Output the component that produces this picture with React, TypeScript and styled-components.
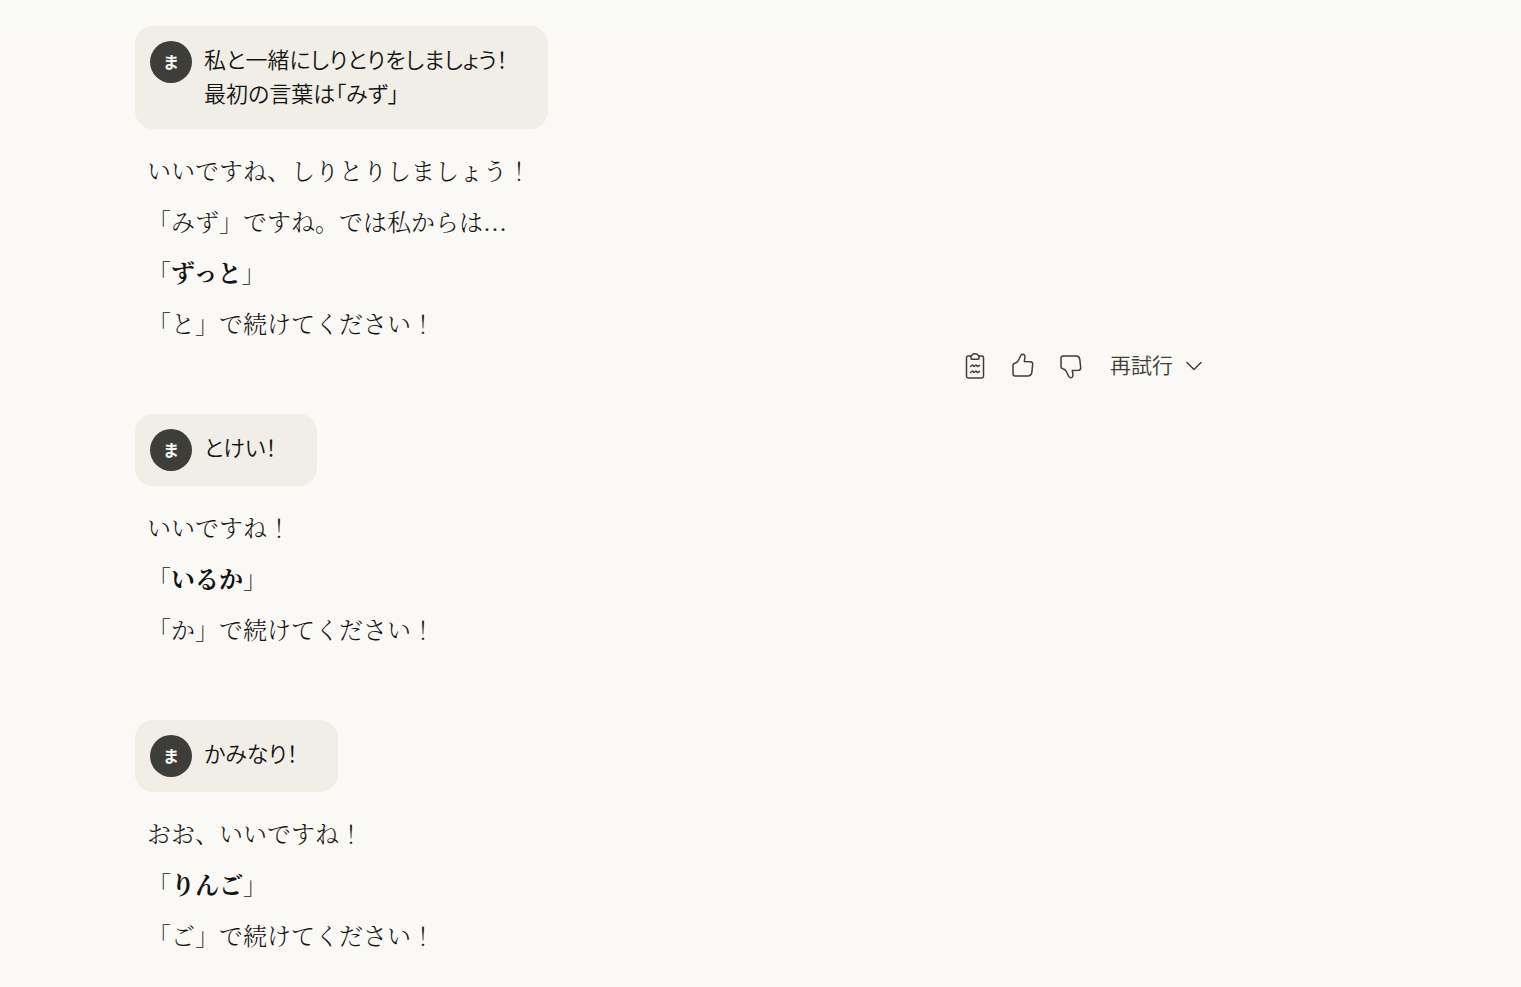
import React from "react";
import styled, { createGlobalStyle } from "styled-components";

const sans = `"Yu Gothic UI", "Noto Sans CJK JP", sans-serif`;
const serif = `"Liberation Serif", "Noto Serif CJK JP", "Noto Serif JP", "Noto Sans CJK JP", serif`;

const GlobalStyle = createGlobalStyle`
  * { box-sizing: border-box; }
  body { margin: 0; background: #faf9f5; color: #141413; }
`;

const Page = styled.main`
  min-height: 100vh;
  padding: 26px 48px 0 135px;
  background: linear-gradient(#f9fbf6, #faf9f5 26px);
`;

const Column = styled.div`
  max-width: 1071px;
`;

const Bubble = styled.section`
  display: flex;
  align-items: flex-start;
  gap: 12px;
  width: fit-content;
  padding: 15px 40px 15px 15px;
  border-radius: 18px;
  background: #f0eee6;
`;

const Avatar = styled.span`
  display: flex;
  flex: none;
  align-items: center;
  justify-content: center;
  width: 42px;
  height: 42px;
  padding-bottom: 2px;
  border-radius: 50%;
  background: #3d3d3a;
  color: #faf9f5;
  font: 700 16px/24px ${sans};
`;

const UserText = styled.p`
  margin: 0;
  padding-bottom: 5px;
  font: 350 22px/34px ${sans};
  font-feature-settings: "palt";
  white-space: pre-line;
`;

const Reply = styled.section`
  display: flex;
  flex-direction: column;
  gap: 15px;
  padding: 25px 12px 0;
`;

const Line = styled.p`
  margin: 0;
  font: 300 24px/36px ${serif};

  strong {
    font-weight: 700;
  }
`;

const Footer = styled.footer`
  display: flex;
  align-items: flex-start;
  justify-content: flex-end;
  height: 71px;
`;

const IconButton = styled.button`
  display: flex;
  align-items: center;
  justify-content: center;
  width: 48px;
  height: 46px;
  padding: 0;
  border: 0;
  background: none;
  color: #3d3d3a;
`;

const RetryButton = styled.button`
  display: flex;
  align-items: center;
  gap: 12px;
  height: 46px;
  padding: 0 3px 0 15px;
  border: 0;
  background: none;
  color: #3d3d3a;
  font: 350 21px/30px ${sans};
`;

const RetryLabel = styled.span`
  padding-bottom: 4px;
`;

const iconProps = {
  width: 30,
  height: 30,
  viewBox: "0 0 30 30",
  fill: "none",
  stroke: "currentColor",
  strokeWidth: 1.5,
  strokeLinecap: "round" as const,
  strokeLinejoin: "round" as const,
  "aria-hidden": true,
};

const ClipboardIcon = () => (
  <svg {...iconProps}>
    <path d="M11 5H8.2Q6.5 5 6.5 6.7V25.300Q6.500 27 8.200 27H21.800Q23.500 27 23.500 25.300V6.700Q23.500 5 21.800 5H19" />
    <path d="M11 5.200Q11.800 5 12.200 3.800Q12.900 2.700 15 2.700Q17.100 2.700 17.800 3.800Q18.200 5 19 5.200V7.200Q19 8.300 17.900 8.300H12.100Q11 8.300 11 7.200Z" />
    <path d="M10.500 15.500L12.500 14L14 15.500L16 14L17.500 15.500L19.500 14.300M10.500 21.500L12.500 20L14 21.500L16 20L17.500 21.500L19.500 20.300" />
  </svg>
);

const ThumbIcon = ({ down = false }: { down?: boolean }) => (
  <svg {...iconProps}>
    <path
      transform={down ? "matrix(1 0 0 -1 0 30)" : undefined}
      d="M5 14.200Q5 12.700 6.800 12.200Q9.600 11.500 10.500 9.200L12.500 5Q13.300 3.300 14.700 3.300Q17.200 3.500 16.900 6.400L16.300 10.500L22.500 10.700Q24.900 11 24.700 13.300L23.800 21.700Q23.300 24.700 20.500 24.900H7Q5 24.900 5 22.700Z"
    />
  </svg>
);

const ChevronIcon = () => (
  <svg {...iconProps} width={18} height={18} viewBox="0 0 18 18">
    <path d="M2 5.500L9 12.500L16 5.500" />
  </svg>
);

const Actions = () => (
  <>
    <IconButton aria-label="コピー"><ClipboardIcon /></IconButton>
    <IconButton aria-label="良い回答"><ThumbIcon /></IconButton>
    <IconButton aria-label="良くない回答"><ThumbIcon down /></IconButton>
    <RetryButton><RetryLabel>再試行</RetryLabel><ChevronIcon /></RetryButton>
  </>
);

type Turn = { user: string; reply: React.ReactNode[]; actions?: boolean };

const turns: Turn[] = [
  {
    user: "私と一緒にしりとりをしましょう！\n最初の言葉は「みず」",
    reply: [
      "いいですね、しりとりしましょう！",
      "「みず」ですね。では私からは…",
      <>「<strong>ずっと</strong>」</>,
      "「と」で続けてください！",
    ],
    actions: true,
  },
  {
    user: "とけい！",
    reply: ["いいですね！", <>「<strong>いるか</strong>」</>, "「か」で続けてください！"],
  },
  {
    user: "かみなり！",
    reply: ["おお、いいですね！", <>「<strong>りんご</strong>」</>, "「ご」で続けてください！"],
  },
];

export default function App() {
  return (
    <>
      <GlobalStyle />
      <Page lang="ja">
        <Column>
          {turns.map((turn, i) => (
            <article key={i}>
              <Bubble>
                <Avatar>ま</Avatar>
                <UserText>{turn.user}</UserText>
              </Bubble>
              <Reply>
                {turn.reply.map((line, j) => <Line key={j}>{line}</Line>)}
              </Reply>
              {i < turns.length - 1 && <Footer>{turn.actions && <Actions />}</Footer>}
            </article>
          ))}
        </Column>
      </Page>
    </>
  );
}
